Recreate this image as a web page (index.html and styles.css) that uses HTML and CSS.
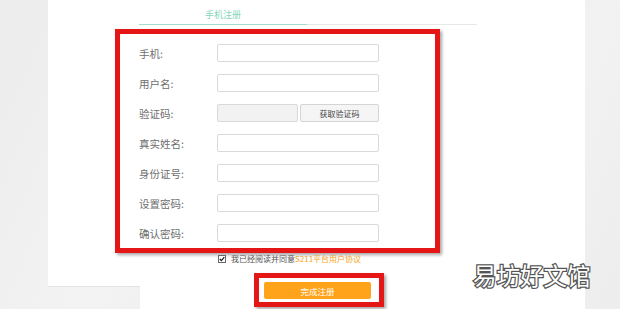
FILE: index.html
```html
<!DOCTYPE html>
<html lang="zh-CN">
<head>
    <meta charset="UTF-8">
    <meta name="viewport" content="width=device-width, initial-scale=1.0">
    <title>手机注册</title>
    <link rel="stylesheet" href="styles.css">
</head>
<body>
    <div class="panel">
        <div class="tabs">
            <div class="tab active">手机注册</div>
        </div>
        <form class="form-box">
            <div class="row">
                <label>手机:</label>
                <input class="field" type="text">
            </div>
            <div class="row">
                <label>用户名:</label>
                <input class="field" type="text">
            </div>
            <div class="row">
                <label>验证码:</label>
                <input class="field code" type="text">
                <button type="button" class="get-code">获取验证码</button>
            </div>
            <div class="row">
                <label>真实姓名:</label>
                <input class="field" type="text">
            </div>
            <div class="row">
                <label>身份证号:</label>
                <input class="field" type="text">
            </div>
            <div class="row">
                <label>设置密码:</label>
                <input class="field" type="password">
            </div>
            <div class="row">
                <label>确认密码:</label>
                <input class="field" type="password">
            </div>
        </form>
        <div class="agree">
            <span class="check">
                <svg width="8" height="8" viewBox="0 0 8 8">
                    <rect x="0.5" y="0.5" width="7" height="7" fill="#fff" stroke="#666"/>
                    <polyline points="1.8,4 3.4,5.6 6.3,2.2" fill="none" stroke="#222" stroke-width="1.3"/>
                </svg>
            </span>
            我已经阅读并同意<a href="#" class="terms">S211平台用户协议</a>
        </div>
        <div class="submit-box">
            <button type="button" class="submit">完成注册</button>
        </div>
    </div>
    <div class="watermark">易坊好文馆</div>
</body>
</html>
```

FILE: styles.css
```css
body {
    margin: 0;
    height: 309px;
    overflow: hidden;
    font-family: "Noto Sans CJK SC", "Liberation Sans", sans-serif;
    background: linear-gradient(115deg, #ececec 0%, #f3f3f3 30%, #ebebeb 55%, #f2f2f2 80%, #ededed 100%);
}
.panel {
    margin-left: 48px;
    width: 537px;
    height: 309px;
    background:
        linear-gradient(#e3e3e3, #e3e3e3) 0 286px / 92px 1px no-repeat,
        linear-gradient(#fff, #fff) 92px 0 / 445px 100% no-repeat,
        linear-gradient(#fff, #fff) 0 0 / 100% 286px no-repeat;
    display: flex;
    flex-direction: column;
}
.tabs {
    margin-left: 91px;
    width: 338px;
    display: flex;
    border-bottom: 1px solid #e8e8e8;
}
.tab {
    width: 168px;
    text-align: center;
    font-size: 9px;
    line-height: 12px;
    padding: 9px 0 3px;
    color: #86d6bd;
    margin-bottom: -1px;
    border-bottom: 1px solid #9fdfcb;
}
.form-box {
    margin: 4px 0 0 67px;
    width: 325px;
    box-sizing: border-box;
    border: 5px solid #e51616;
    box-shadow: 2px 2px 3px rgba(0, 0, 0, 0.35);
    padding: 10px 0 6px 19px;
    display: flex;
    flex-direction: column;
    gap: 12px;
}
.row {
    display: flex;
    align-items: center;
    height: 18px;
}
.row label {
    width: 78px;
    font-size: 10.5px;
    color: #6e6e6e;
}
.field {
    width: 162px;
    height: 18px;
    box-sizing: border-box;
    border: 1px solid #d9d9d9;
    border-radius: 2px;
    background: #fff;
    margin: 0;
    padding: 0;
}
.field.code {
    width: 81px;
    background: #f2f2f2;
}
.get-code {
    width: 79px;
    height: 18px;
    margin: 0 0 0 2px;
    padding: 0;
    border: 1px solid #d4d4d4;
    border-radius: 2px;
    background: #f5f5f5;
    font-family: inherit;
    font-size: 8px;
    color: #444;
}
.agree {
    margin: 1px 0 0 170px;
    height: 10px;
    display: flex;
    align-items: center;
    font-size: 8px;
    line-height: 10px;
    color: #555;
}
.check {
    display: flex;
    margin-right: 5px;
}
.terms {
    color: #f5a623;
    text-decoration: none;
}
.submit-box {
    margin: 9px 0 0 206px;
    width: 130px;
    height: 34px;
    box-sizing: border-box;
    border: 5px solid #e51616;
    box-shadow: 2px 2px 3px rgba(0, 0, 0, 0.35);
    padding: 4px 0 0 5px;
}
.submit {
    display: block;
    width: 107px;
    height: 17px;
    border: 0;
    border-radius: 2px;
    background: #ffa31a;
    color: #fff;
    font-family: inherit;
    font-size: 8.5px;
    padding: 0;
}
.watermark {
    position: absolute;
    left: 473px;
    top: 262px;
    font-size: 23.5px;
    line-height: 26px;
    color: #fff;
    -webkit-text-stroke: 2.5px #555;
    paint-order: stroke fill;
}
```
